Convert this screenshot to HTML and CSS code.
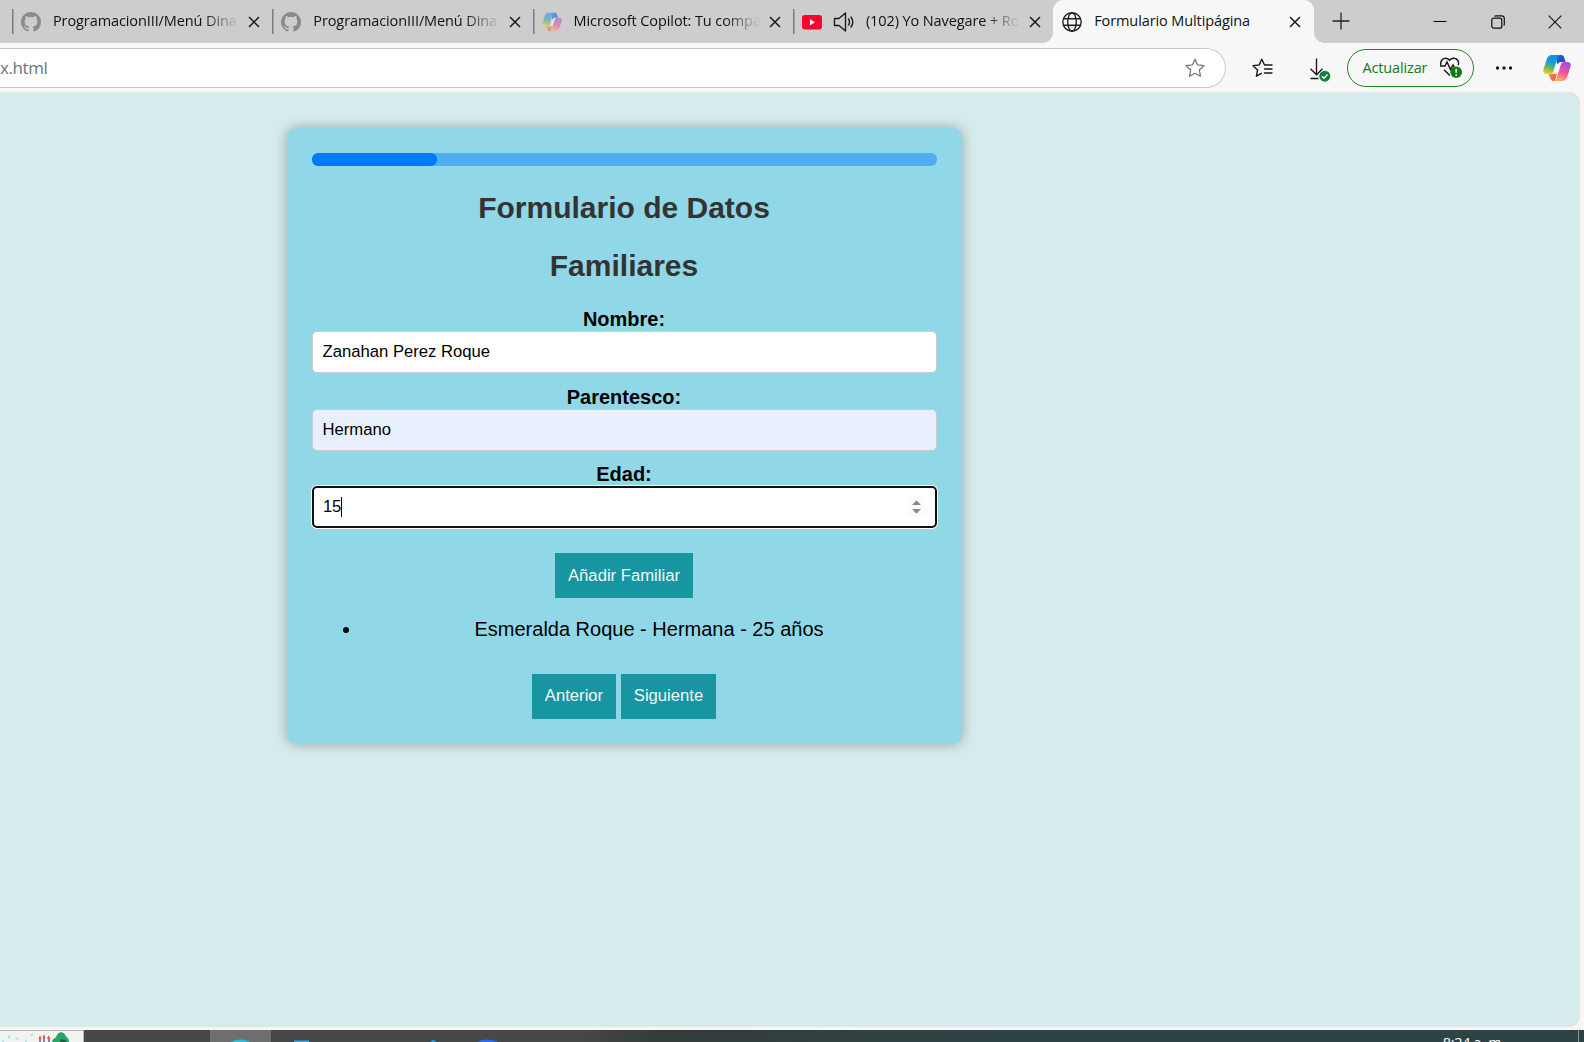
FILE: index.html
```html
<!DOCTYPE html>
<html lang="es">
<head>
<meta charset="utf-8">
<title>Formulario Multipágina</title>
<link rel="stylesheet" href="styles.css">
</head>
<body>
<svg class="defs" aria-hidden="true">
  <defs>
    <linearGradient id="cpA" x1="0.6" y1="0" x2="0.3" y2="1"><stop offset="0" stop-color="#1b8fe8"/><stop offset=".35" stop-color="#1598e0"/><stop offset=".65" stop-color="#5cb56e"/><stop offset="1" stop-color="#f3cf10"/></linearGradient>
    <linearGradient id="cpB" x1="0.6" y1="0" x2="0.3" y2="1"><stop offset="0" stop-color="#a44bea"/><stop offset=".5" stop-color="#ee5595"/><stop offset="1" stop-color="#ffae6a"/></linearGradient>
    <linearGradient id="cpC" x1="0" y1="0" x2="1" y2="1"><stop offset="0" stop-color="#1668d8"/><stop offset="1" stop-color="#2245c4"/></linearGradient>
    <linearGradient id="cpD" x1="0" y1="0" x2="1" y2="1"><stop offset="0" stop-color="#ff9a3d"/><stop offset="1" stop-color="#f0503e"/></linearGradient>
    <symbol id="copilot" viewBox="0 0 28 26">
      <path fill="url(#cpC)" d="M14 0h4c2 0 2.700 1 3.200 2.600L22.500 7H19c-2 0-3.200 1-3.800 3L13.500 7z"/>
      <path fill="url(#cpD)" d="M5.500 19h3c2 0 3-1.200 3.500-3l2 3-1.400 4.500C12.500 25 12 26 11 26h-.5C8.600 26 8 25 7.500 23.500z"/>
      <path fill="url(#cpA)" d="M9 0h8c-1.500.3-2.200 1.500-2.700 3L10.500 16c-.7 2-1.600 3-3.600 3H3.500C.7 19-.3 17.300.4 14.500L4 3.500C4.800 1.200 6.500 0 9 0z"/>
      <path fill="url(#cpB)" d="M19 26h-8c1.500-.3 2.200-1.500 2.700-3L17.500 10c.7-2 1.600-3 3.600-3h3.400c2.800 0 3.800 1.700 3.100 4.500L24 22.500c-.8 2.300-2.500 3.500-5 3.500z"/>
      <path fill="#f7f7f7" d="M14.300 10.500c.7-2.400 2-3.500 4.200-3.500h2.300c-1.900 0-2.700 1-3.300 3l-1.800 6c-.7 2.200-1.800 3-3.800 3H9c1.900-.2 2.700-1 3.300-3z" class="copilot-gap"/>
    </symbol>
    <symbol id="github" viewBox="0 0 16 16">
      <path fill="#888a8c" d="M8 0C3.580 0 0 3.580 0 8c0 3.540 2.290 6.530 5.470 7.590.4.070.55-.17.55-.38 0-.19-.01-.82-.01-1.490-2.010.37-2.530-.49-2.690-.94-.09-.23-.48-.94-.82-1.130-.28-.15-.68-.52-.01-.53.63-.01 1.080.58 1.230.82.72 1.210 1.870.87 2.330.66.07-.52.28-.87.51-1.070-1.780-.2-3.640-.89-3.640-3.950 0-.87.31-1.590.82-2.150-.08-.2-.36-1.020.08-2.120 0 0 .67-.21 2.200.82a7.600 7.600 0 0 1 4 0c1.530-1.040 2.200-.82 2.200-.82.44 1.100.16 1.920.08 2.120.51.56.82 1.270.82 2.150 0 3.070-1.870 3.750-3.650 3.950.29.25.54.73.54 1.480 0 1.070-.01 1.930-.01 2.200 0 .21.15.46.55.38A8.010 8.010 0 0 0 16 8c0-4.420-3.580-8-8-8z"/>
    </symbol>
    <symbol id="close" viewBox="0 0 12 12"><path d="M1 1l10 10M11 1L1 11" fill="none" stroke="#1a1a1a" stroke-width="1.500"/></symbol>
  </defs>
</svg>

<header class="tabs">
  <div class="tab">
    <svg class="favicon"><use href="#github"/></svg>
    <span class="tab-title faded">ProgramacionIII/Menú Dina</span>
    <svg class="tab-close"><use href="#close"/></svg>
  </div>
  <div class="tab">
    <svg class="favicon"><use href="#github"/></svg>
    <span class="tab-title faded">ProgramacionIII/Menú Dina</span>
    <svg class="tab-close"><use href="#close"/></svg>
  </div>
  <div class="tab">
    <svg class="favicon dim"><use href="#copilot"/></svg>
    <span class="tab-title faded">Microsoft Copilot: Tu compa</span>
    <svg class="tab-close"><use href="#close"/></svg>
  </div>
  <div class="tab">
    <svg class="favicon" viewBox="0 0 20 20"><rect y="3" width="20" height="14.500" rx="3" fill="#ff0033"/><path d="M8 7.300v6l5-3z" fill="#fff"/></svg>
    <svg class="speaker" viewBox="0 0 22 20" fill="none" stroke="#1a1a1a" stroke-width="1.400" stroke-linejoin="round" stroke-linecap="round"><path d="M1.500 6.500h4.500L12.500 1v18L6 13.500H1.500zM15.500 7q2 3 0 6M18 5q3.600 5 0 10"/></svg>
    <span class="tab-title faded">(102) Yo Navegare + Ro</span>
    <svg class="tab-close"><use href="#close"/></svg>
  </div>
  <div class="tab active">
    <svg class="favicon" viewBox="0 0 20 20" fill="none" stroke="#222" stroke-width="1.400"><circle cx="10" cy="10" r="9.200"/><ellipse cx="10" cy="10" rx="4.300" ry="9.200"/><path d="M1.500 6.700h17M1.500 13.300h17"/></svg>
    <span class="tab-title">Formulario Multipágina</span>
    <svg class="tab-close"><use href="#close"/></svg>
  </div>
  <svg class="new-tab" viewBox="0 0 18 18"><path d="M9 .5v17M.5 9h17" stroke="#222" stroke-width="1.300"/></svg>
  <div class="window-buttons">
    <svg viewBox="0 0 14 14"><path d="M.5 6.500h13" stroke="#111" stroke-width="1.100"/></svg>
    <svg viewBox="0 0 14 14" fill="none" stroke="#111" stroke-width="1.200"><rect x=".8" y="3.200" width="10" height="10" rx="2"/><path d="M3.500 1.300C4 .8 4.500.8 5 .8h5.500c1.800 0 2.800 1 2.800 2.800V9c0 .7-.1 1.200-.6 1.700"/></svg>
    <svg viewBox="0 0 14 14"><path d="M.7.700l12.600 12.600M13.300.7L.7 13.300" stroke="#111" stroke-width="1.100"/></svg>
  </div>
</header>

<div class="toolbar">
  <div class="address">
    <span class="url">x.html</span>
    <svg class="star" viewBox="0 0 20 20"><path d="M10 1.200l2.600 5.700 6.300.8-4.600 4.300 1.200 6.200L10 15.200l-5.500 3 1.200-6.200L1.100 7.700l6.300-.8z" fill="none" stroke="#777" stroke-width="1.300" stroke-linejoin="round"/></svg>
  </div>
  <svg class="favorites" viewBox="0 0 21 20" fill="none" stroke="#1a1a1a" stroke-width="1.400" stroke-linejoin="round" stroke-linecap="round"><path d="M13 7l-.6-.2L9.800 1.200 7.200 6.900l-6.200.8L5.600 12l-1.200 6.200 5-2.800M13.500 7H20M12.500 11H20M12.500 15H20"/></svg>
  <svg class="download" viewBox="0 0 22 24"><path d="M7.500.5v16M1.500 10.800l6 6 6-6M1.500 20.500h8" fill="none" stroke="#1a1a1a" stroke-width="1.400"/><circle cx="15.800" cy="18.200" r="5.500" fill="#15803c"/><path d="M13 18.300l2 2 3.600-3.800" fill="none" stroke="#fff" stroke-width="1.300"/></svg>
  <div class="update">
    <span>Actualizar</span>
    <svg viewBox="0 0 24 22" fill="none" stroke="#1a1a1a" stroke-width="1.500"><path d="M1.800 8C.8 3.500 4 1.200 6.500 1.200c2 0 3 .8 4 2 1-1.200 2.200-2 4-2 3.500 0 6.300 3 4.800 7M1 9h5l2-4 3.500 7.500L14 8l1.200 2.200M5 12.800l5.800 5.700"/><circle cx="17.200" cy="15.200" r="5.800" fill="#107c10" stroke="none"/><path d="M17.200 11.800v4M17.200 17.300v1.500" stroke="#fff"/></svg>
  </div>
  <svg class="more" viewBox="0 0 18 4" fill="#1a1a1a"><circle cx="2.500" cy="2" r="1.700"/><circle cx="9" cy="2" r="1.700"/><circle cx="15.500" cy="2" r="1.700"/></svg>
  <svg class="copilot"><use href="#copilot"/></svg>
</div>

<main class="viewport">
  <form class="card">
    <div class="progress"><div class="progress-fill" style="width:20%"></div></div>
    <h2>Formulario de Datos</h2>
    <h2>Familiares</h2>
    <label>Nombre:</label>
    <div class="field">Zanahan Perez Roque</div>
    <label>Parentesco:</label>
    <div class="field autofilled">Hermano</div>
    <label>Edad:</label>
    <div class="field focused">
      <span class="typed">15</span>
      <svg class="spinner" viewBox="0 0 19 20"><rect width="19" height="20" fill="#fcfcfc"/><path d="M5 8l4-4.300h1L14 8zM5 12l4 4.300h1L14 12z" fill="#8a8a8a"/></svg>
    </div>
    <button type="button" class="add">Añadir Familiar</button>
    <ul><li>Esmeralda Roque - Hermana - 25 años</li></ul>
    <div class="actions"><button type="button" class="prev">Anterior</button><button type="button" class="next">Siguiente</button></div>
  </form>
</main>

<footer class="taskbar">
  <div class="widget">
    <svg viewBox="0 0 83 11"><g fill="#a5e4ee"><circle cx="9" cy="6" r="1.500"/><circle cx="17" cy="7.500" r="1.200"/><circle cx="32" cy="4" r="1.200"/><circle cx="26" cy="10" r="1"/><circle cx="3" cy="10" r="1"/></g><path d="M40 11V6M44 11V5M49 11V6" stroke="#8a86a0" stroke-width="2"/><path d="M38.500 8l1.500-4 1.500 4zM42.500 7L44 3l1.500 4zM47 8l1.500-4L50 8z" fill="#ec5a3c"/><path d="M52 11q1-4 4-4.500 1-4.500 5-5.500 4 1 5 4.500 3 2 3 5.500z" fill="#26a566"/><path d="M60 11l1-3 4 1 2 2z" fill="#29583f"/></svg>
  </div>
  <div class="apps">
    <svg viewBox="0 0 300 12"><rect x="0" width="61" height="12" fill="#6d6f6f"/><ellipse cx="30.500" cy="17" rx="13" ry="7.500" fill="#30bfd6"/><path d="M84 10.500h15V12H84z" fill="#38a9e4"/><path d="M220 12l3-2.500 4 2.500z" fill="#2499d8"/><ellipse cx="277.500" cy="17" rx="14" ry="7.500" fill="#2b6cf0"/></svg>
  </div>
  <div class="clock">8:24 a. m.</div>
  <div class="show-desktop"></div>
</footer>
</body>
</html>
```

FILE: styles.css
```css
* { box-sizing: border-box; }
body {
  margin: 0;
  width: 1584px;
  height: 1042px;
  overflow: hidden;
  display: flex;
  flex-direction: column;
  background: #f7f7f7;
  font-family: "Open Sans", "Noto Sans", sans-serif;
  color: #111;
}
svg { display: block; flex: none; }
.defs { position: absolute; width: 0; height: 0; }

/* tab strip */
.tabs {
  height: 43px;
  flex: none;
  display: flex;
  padding-left: 12px;
  background: #cdcdcd;
}
.tab {
  width: 260.300px;
  flex: none;
  display: flex;
  align-items: center;
  padding: 0 12px 0 7px;
  background: linear-gradient(#7b7b7b, #7b7b7b) 0 9px / 1.500px 25px no-repeat;
}
.favicon { width: 20px; height: 20px; margin: 1px 12px 0 2px; }
.favicon.dim { opacity: .55; }
.speaker { width: 22px; height: 20px; margin: 0 11px 0 -1px; }
.tab-title {
  flex: 1;
  min-width: 0;
  overflow: hidden;
  white-space: nowrap;
  font-size: 14.500px;
  line-height: 22px;
  letter-spacing: -.1px;
  margin-top: -1px;
}
.faded {
  -webkit-mask-image: linear-gradient(to right, #000 calc(100% - 36px), transparent);
  mask-image: linear-gradient(to right, #000 calc(100% - 36px), transparent);
}
.tab-close { width: 12px; height: 12px; margin: 1px 0 0 9px; }
.tab.active {
  position: relative;
  width: 261px;
  padding-right: 13px;
  background: #f7f7f7;
  border-radius: 10px 10px 0 0;
}
.tab.active::before, .tab.active::after {
  content: "";
  position: absolute;
  bottom: 0;
  width: 10px;
  height: 10px;
}
.tab.active::before { left: -10px; background: radial-gradient(circle at 0 0, #cdcdcd 9.500px, #f7f7f7 10px); }
.tab.active::after { right: -10px; background: radial-gradient(circle at 100% 0, #cdcdcd 9.500px, #f7f7f7 10px); }
.new-tab { width: 18px; height: 18px; margin: 12px 0 0 18px; }
.window-buttons { display: flex; gap: 43.500px; margin: 15px 0 0 83px; }
.window-buttons svg { width: 14px; height: 14px; }

/* address bar */
.toolbar { height: 50px; flex: none; display: flex; align-items: flex-start; }
.address {
  width: 1226px;
  height: 40px;
  margin-top: 5px;
  padding-right: 20px;
  display: flex;
  align-items: center;
  justify-content: space-between;
  background: #fff;
  border: 1px solid #cbcbcb;
  border-left: 0;
  border-radius: 0 20px 20px 0;
}
.url { font-size: 17px; color: #707478; letter-spacing: -.4px; margin-top: -2px; }
.star { width: 20px; height: 20px; }
.favorites { width: 21px; height: 20px; margin: 15px 0 0 26px; }
.download { width: 22px; height: 24px; margin: 15px 0 0 36px; }
.update {
  width: 127px;
  height: 38px;
  margin: 6px 0 0 16px;
  padding: 0 10px 0 14.500px;
  display: flex;
  align-items: center;
  justify-content: space-between;
  border: 1.300px solid #1d861d;
  border-radius: 19px;
  font-size: 14.500px;
  letter-spacing: -.15px;
  color: #107c10;
}
.update span { margin-top: -2px; }
.update svg { width: 24px; height: 22px; }
.more { width: 18px; height: 4px; margin: 23px 0 0 21px; }
.copilot { width: 28px; height: 26px; margin: 12px 0 0 30px; }

/* page */
.viewport {
  width: 1579px;
  height: 933px;
  flex: none;
  padding: 35px 0 0 287px;
  background: #d6ebec;
  border-radius: 0 10px 10px 0;
  box-shadow: 0 0 2px rgba(0, 0, 0, .25);
  font-family: "Liberation Sans", Arial, sans-serif;
  font-size: 20px;
  line-height: 23px;
  color: #000;
  text-align: center;
}
.card {
  width: 675px;
  height: 616px;
  padding: 25px;
  background: #90d8e7;
  border-radius: 10px;
  box-shadow: 0 0 12.500px rgba(0, 0, 0, .3);
}
.progress {
  height: 13px;
  margin-bottom: 13px;
  background: #50adf2;
  border-radius: 6.250px;
}
.progress-fill { height: 100%; background: #007bff; border-radius: 6.250px; }
h2 { margin: 0; padding-right: 1px; font-size: 30px; line-height: 58px; color: #333; }
h2 + label { margin-top: 13px; }
label { display: block; padding-right: 1px; font-weight: bold; margin-top: 13px; }
.field {
  height: 42px;
  padding: 0 9.500px;
  display: flex;
  align-items: center;
  background: #fff;
  border: 1px solid #ccc;
  border-radius: 5px;
  font-size: 16.670px;
  line-height: 20px;
}
.field + label { margin-top: 13px; }
.autofilled { background: #e8f0fe; }
.autofilled + label { margin-top: 12px; }
.focused {
  justify-content: space-between;
  border: 2px solid #101010;
  box-shadow: 0 0 0 1px #fff;
  padding: 0 9px;
}
.typed { margin-top: -1px; border-right: 1px solid #000; letter-spacing: -.3px; }
.spinner { width: 19px; height: 20px; }
button {
  height: 45px;
  padding: 0 0 1px;
  border: 0;
  background: #1795a1;
  color: #f1fafa;
  font: 16.670px/20px "Liberation Sans", Arial, sans-serif;
}
.add { display: block; width: 138px; margin: 25px 0 20px 243px; padding: 1px 0 0; }
ul { margin: 0 0 33px; padding: 0 1px 0 50px; }
.actions { display: flex; gap: 5px; padding-left: 220px; }
.prev { width: 84px; }
.next { width: 95px; }

/* taskbar */
.taskbar {
  height: 12px;
  flex: none;
  margin-top: 4px;
  display: flex;
  overflow: hidden;
  background: linear-gradient(to right, #464747 580px, #323c39 660px, #2e4346 1000px, #2e4346);
}
.widget { width: 84px; background: #f1f2f2; border: solid #b5b5b5; border-width: 1px 1px 0 0; }
.widget svg { width: 83px; height: 11px; }
.apps { width: 300px; margin-left: 126px; }
.apps svg { width: 300px; height: 12px; }
.clock {
  margin: 3px 0 0 auto;
  padding-right: 73px;
  font-size: 14.500px;
  line-height: 20px;
  letter-spacing: -.3px;
  color: #fff;
}
.show-desktop { width: 6px; border-left: 1px solid #8b9798; }
```
